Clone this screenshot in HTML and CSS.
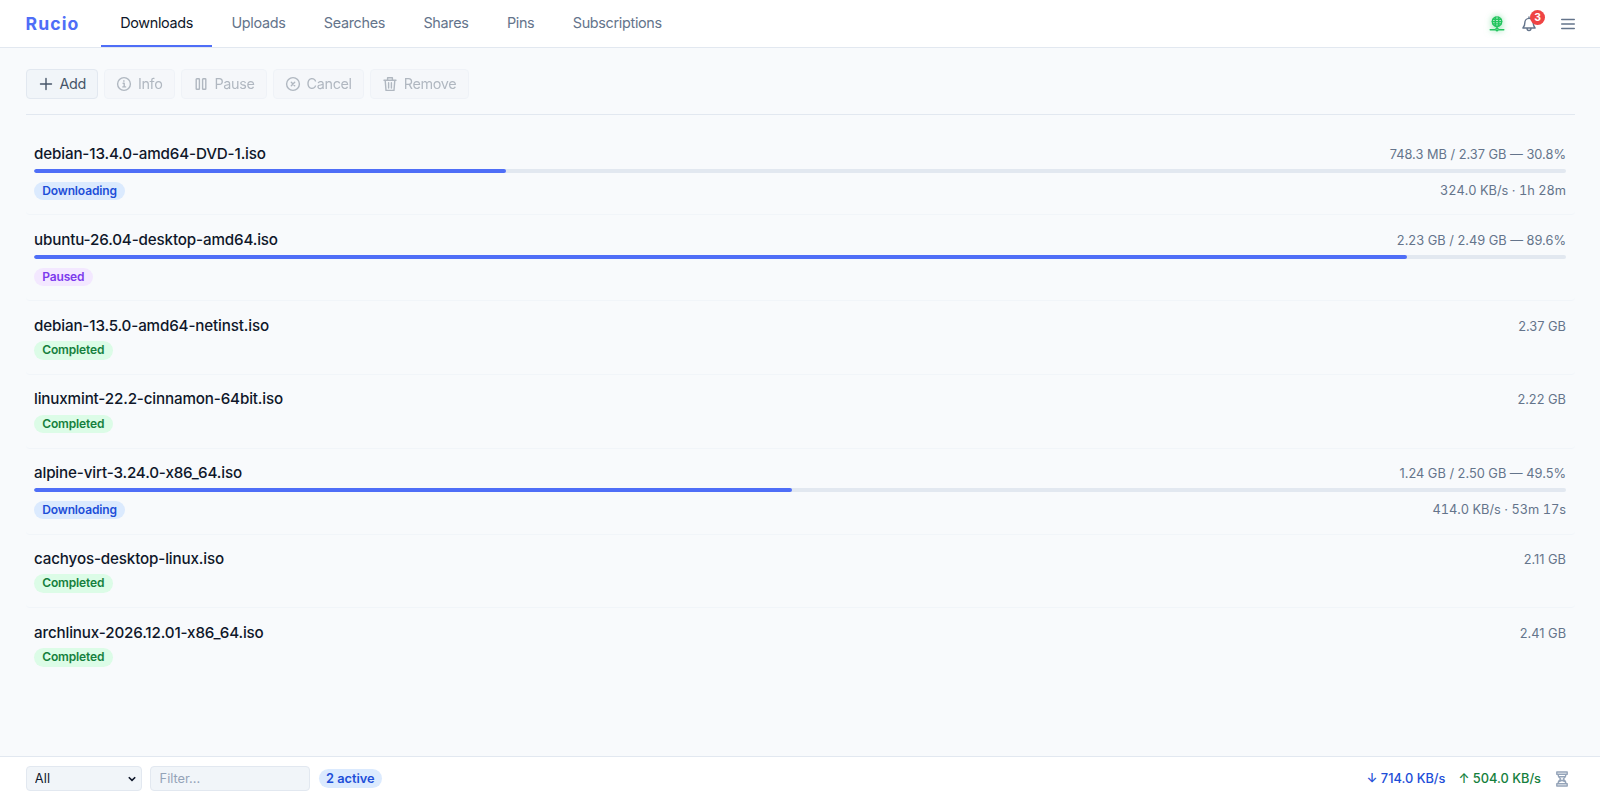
FILE: index.html
```html
<!DOCTYPE html>
<html lang="en">
<head>
  <meta charset="UTF-8">
  <meta name="viewport" content="width=device-width, initial-scale=1.0">
  <title>Rucio</title>
  <link rel="stylesheet" href="styles.css">
</head>
<body>
  <header class="topbar">
    <span class="brand">Rucio</span>
    <nav class="tabs">
      <a href="#downloads" class="tab active">Downloads</a>
      <a href="#uploads" class="tab">Uploads</a>
      <a href="#searches" class="tab">Searches</a>
      <a href="#shares" class="tab">Shares</a>
      <a href="#pins" class="tab">Pins</a>
      <a href="#subscriptions" class="tab">Subscriptions</a>
    </nav>
    <div class="top-actions">
      <span class="net-status">
        <svg class="icon" viewBox="0 0 16 16"><circle cx="8" cy="5.6" r="4.7"/><path d="M3.3 5.6h9.4M4 3.3h8M4 7.9h8M6.3 1.2v8.8M9.7 1.2v8.8M8 10.3v2.5M1.2 13.8h4.6M10.2 13.8h4.6"/><circle cx="8" cy="13.5" r="1.2"/></svg>
      </span>
      <button class="icon-btn bell">
        <svg class="icon" viewBox="0 0 16 16"><path d="M8 1v1.3M3.8 7c0-2.7 1.8-4.6 4.2-4.6s4.2 1.9 4.2 4.6c0 2.6.7 3.7 1.9 5H1.9c1.2-1.3 1.9-2.4 1.9-5zM6 12.2c0 1.4.8 2.3 2 2.3s2-.9 2-2.3"/></svg>
        <span class="count">3</span>
      </button>
      <button class="icon-btn menu">
        <svg class="icon" viewBox="0 0 16 16"><path d="M1.7 3.5h12.6M1.7 8h12.6M1.7 12.5h12.6"/></svg>
      </button>
    </div>
  </header>

  <main class="content">
    <div class="toolbar">
      <button class="btn"><svg class="icon" viewBox="0 0 16 16"><path d="M8 2.5v11M2.5 8h11"/></svg>Add</button>
      <button class="btn" disabled><svg class="icon" viewBox="0 0 16 16"><circle cx="8" cy="8" r="6.4"/><path d="M7.1 7.2h1.1v3.6M6.8 10.9h2.8M7.9 4.7v.6"/></svg>Info</button>
      <button class="btn" disabled><svg class="icon" viewBox="0 0 16 16"><rect x="3.2" y="2.7" width="3.2" height="10.6" rx=".6"/><rect x="9.6" y="2.7" width="3.2" height="10.6" rx=".6"/></svg>Pause</button>
      <button class="btn" disabled><svg class="icon" viewBox="0 0 16 16"><circle cx="8" cy="8" r="6.4"/><path d="M6.3 6.3l3.4 3.4M9.7 6.3l-3.4 3.4"/></svg>Cancel</button>
      <button class="btn" disabled><svg class="icon" viewBox="0 0 16 16"><path d="M2 4.2h12M5.6 4V1.7h4.8V4M3.2 4.4l.8 10h8l.8-10M6.6 6.8v5.2M9.4 6.8v5.2"/></svg>Remove</button>
    </div>

    <ul class="list">
      <li class="item">
        <div class="row"><span class="name">debian-13.4.0-amd64-DVD-1.iso</span><span class="meta">748.3 MB / 2.37 GB — 30.8%</span></div>
        <div class="progress"><div class="bar" style="width:30.8%"></div></div>
        <div class="row foot"><span class="badge downloading">Downloading</span><span class="meta rate">324.0 KB/s · 1h 28m</span></div>
      </li>
      <li class="item">
        <div class="row"><span class="name">ubuntu-26.04-desktop-amd64.iso</span><span class="meta">2.23 GB / 2.49 GB — 89.6%</span></div>
        <div class="progress"><div class="bar" style="width:89.6%"></div></div>
        <div class="row foot"><span class="badge paused">Paused</span></div>
      </li>
      <li class="item">
        <div class="row"><span class="name">debian-13.5.0-amd64-netinst.iso</span><span class="meta">2.37 GB</span></div>
        <div class="row foot"><span class="badge completed">Completed</span></div>
      </li>
      <li class="item">
        <div class="row"><span class="name">linuxmint-22.2-cinnamon-64bit.iso</span><span class="meta">2.22 GB</span></div>
        <div class="row foot"><span class="badge completed">Completed</span></div>
      </li>
      <li class="item">
        <div class="row"><span class="name">alpine-virt-3.24.0-x86_64.iso</span><span class="meta">1.24 GB / 2.50 GB — 49.5%</span></div>
        <div class="progress"><div class="bar" style="width:49.5%"></div></div>
        <div class="row foot"><span class="badge downloading">Downloading</span><span class="meta rate">414.0 KB/s · 53m 17s</span></div>
      </li>
      <li class="item">
        <div class="row"><span class="name">cachyos-desktop-linux.iso</span><span class="meta">2.11 GB</span></div>
        <div class="row foot"><span class="badge completed">Completed</span></div>
      </li>
      <li class="item">
        <div class="row"><span class="name">archlinux-2026.12.01-x86_64.iso</span><span class="meta">2.41 GB</span></div>
        <div class="row foot"><span class="badge completed">Completed</span></div>
      </li>
    </ul>
  </main>

  <footer class="statusbar">
    <div class="select-wrap">
      <select class="select"><option>All</option><option>Active</option><option>Paused</option><option>Completed</option></select>
      <svg class="chevron" viewBox="0 0 8 6"><path d="M.8 1.2L4 4.4l3.2-3.2"/></svg>
    </div>
    <input class="filter" type="text" placeholder="Filter...">
    <span class="active-count">2 active</span>
    <div class="speeds">
      <span class="down">↓ 714.0 KB/s</span>
      <span class="up">↑ 504.0 KB/s</span>
      <svg class="icon hourglass" viewBox="0 0 16 16"><path d="M2.8 1h10.4v2.2H2.8zM2.8 12.8h10.4V15H2.8zM4 3.2c0 2.6 1 3.6 2.7 4.8C5 9.2 4 10.2 4 12.8M12 3.2c0 2.6-1 3.6-2.7 4.8 1.7 1.2 2.7 2.2 2.7 4.8M4.8 5.7h6.4M5.2 10.6C6.5 9.8 7.2 9.5 8 9.5s1.5.3 2.8 1.1"/></svg>
    </div>
  </footer>
</body>
</html>
```
FILE: styles.css
```css
* { margin: 0; padding: 0; box-sizing: border-box; }
body {
  height: 100vh;
  display: flex;
  flex-direction: column;
  overflow: hidden;
  font-family: Inter, sans-serif;
  font-size: 16px;
  color: #0f172a;
  background: #f8fafc;
}
button, input, select { font-family: inherit; }
.icon {
  width: 16px;
  height: 16px;
  flex: none;
  fill: none;
  stroke: currentColor;
  stroke-width: 1.4;
  stroke-linecap: round;
  stroke-linejoin: round;
}

/* Header */
.topbar {
  height: 48px;
  flex: none;
  display: flex;
  align-items: stretch;
  padding: 0 24px 0 25.6px;
  background: #fff;
  border-bottom: 1px solid #e2e8f0;
}
.brand {
  width: 75.4px;
  align-self: center;
  font-size: 17.6px;
  font-weight: 700;
  letter-spacing: 1.1px;
  color: #4f6ef7;
}
.tabs { display: flex; }
.tab {
  display: flex;
  align-items: center;
  padding: 0 19.2px;
  font-size: 14.4px;
  letter-spacing: -0.32px;
  color: #64748b;
  text-decoration: none;
  border-bottom: 2px solid transparent;
}
.tab.active { color: #0f172a; border-bottom-color: #4f6ef7; }
.top-actions { display: flex; align-items: center; margin-left: auto; }
.net-status {
  display: flex;
  color: #22c55e;
  filter: drop-shadow(0 0 3px rgba(34, 197, 94, 0.6));
}
.icon-btn { position: relative; display: flex; border: none; background: none; color: #64748b; }
.bell { margin-left: 16px; }
.menu { margin-left: 23px; }
.count {
  position: absolute;
  top: -6px;
  left: 9px;
  width: 15px;
  height: 15px;
  border-radius: 8px;
  background: #ef4444;
  color: #fff;
  font-size: 10.4px;
  font-weight: 700;
  line-height: 15px;
  text-align: center;
}

/* Content */
.content { flex: 1; padding: 21px 25px 0 25.6px; }
.toolbar {
  display: flex;
  gap: 6px;
  padding-bottom: 15px;
  border-bottom: 1px solid #e2e8f0;
}
.btn {
  height: 30px;
  display: flex;
  align-items: center;
  gap: 5.6px;
  padding: 0 11.2px 1px;
  border: 1px solid #e2e8f0;
  border-radius: 4px;
  background: #f1f5f9;
  color: #475569;
  font-size: 14.4px;
  letter-spacing: -0.33px;
}
.btn .icon { position: relative; top: 0.5px; }
.btn:disabled { opacity: 0.4; }

/* Transfer list */
.list { list-style: none; padding-top: 14.4px; }
.item { padding: 14.4px 9px 14.4px 8.4px; border-bottom: 1px solid #f1f5f9; border-radius: 4px; }
.item:last-child { border-bottom: none; }
.row { height: 21px; display: flex; align-items: baseline; justify-content: space-between; }
.name { font-size: 15.2px; font-weight: 500; line-height: 20.4px; letter-spacing: -0.15px; }
.meta { font-size: 12.8px; line-height: 18.4px; color: #64748b; }
.rate { font-variant-numeric: tabular-nums; }
.progress {
  height: 4px;
  margin-top: 4.4px;
  border-radius: 2px;
  background: #e2e8f0;
  overflow: hidden;
}
.bar { height: 100%; border-radius: 2px; background: #4f6ef7; }
.foot { height: 18.4px; align-items: center; margin-top: 4.5px; }
.progress + .foot { margin-top: 8.4px; }
.badge {
  padding: 2px 8.2px;
  border-radius: 10px;
  font-size: 12px;
  font-weight: 600;
  line-height: 14.4px;
  letter-spacing: -0.13px;
}
.downloading { background: #dbeafe; color: #1d4ed8; }
.paused { background: #f3e8ff; color: #7c3aed; }
.completed { background: #dcfce7; color: #15803d; }

/* Footer */
.statusbar {
  height: 44px;
  flex: none;
  display: flex;
  align-items: center;
  padding: 0 25.6px;
  background: #fff;
  border-top: 1px solid #e2e8f0;
}
.select, .filter {
  height: 25px;
  border: 1px solid #e2e8f0;
  border-radius: 4px;
  background: #f1f5f9;
  font-size: 12.8px;
  color: #0f172a;
}
.select-wrap { position: relative; display: flex; }
.select { width: 116px; padding-left: 8.2px; letter-spacing: 0.2px; appearance: none; }
.chevron {
  position: absolute;
  top: 10px;
  right: 6px;
  width: 8px;
  height: 6px;
  fill: none;
  stroke: #0f172a;
  stroke-width: 1.6;
  pointer-events: none;
}
.filter { width: 160px; margin-left: 8px; padding: 0 9px; }
.filter::placeholder { color: #94a3b8; }
.active-count {
  margin-left: 9px;
  padding: 2px 7.4px;
  border-radius: 10px;
  background: #dbeafe;
  color: #1d4ed8;
  font-size: 12.8px;
  font-weight: 600;
}
.speeds { display: flex; align-items: center; margin-left: auto; font-size: 12.8px; font-weight: 500; }
.down { color: #1d4ed8; }
.up { margin-left: 13px; color: #15803d; }
.hourglass { margin: 0 4.4px 0 13px; color: #94a3b8; }
```
